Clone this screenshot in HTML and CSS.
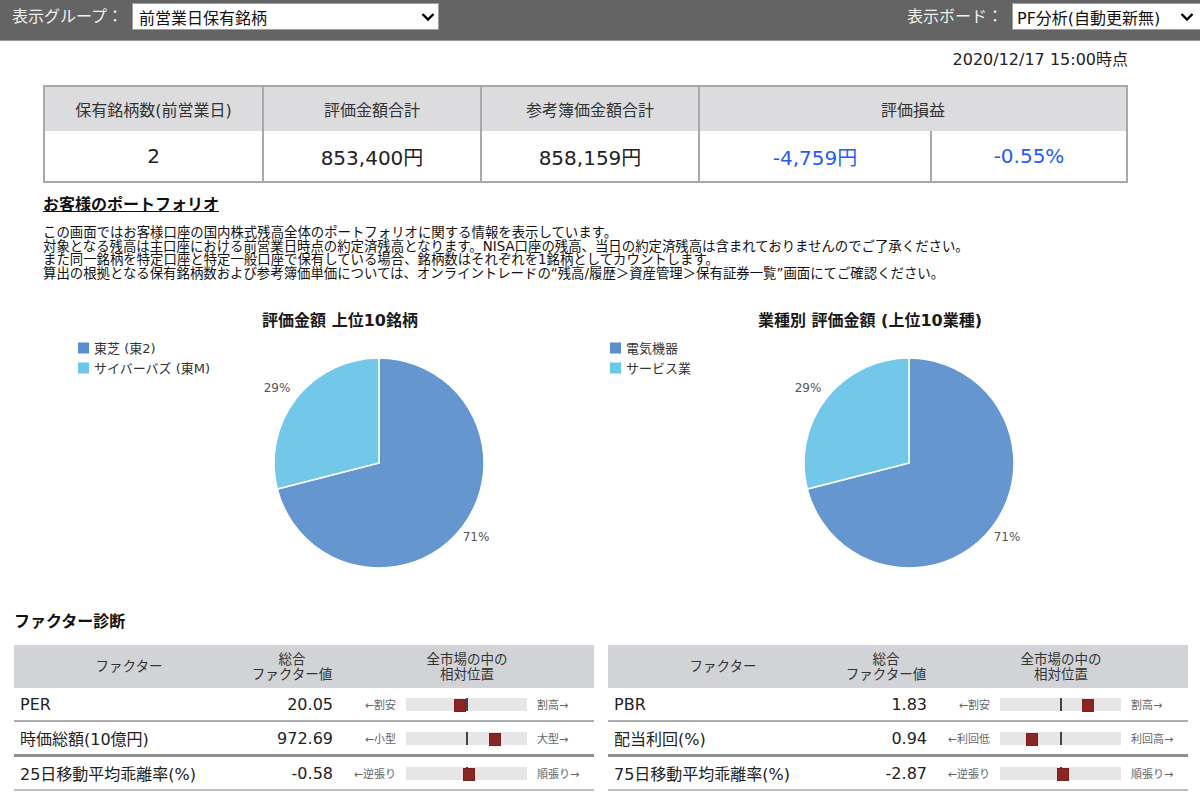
FILE: index.html
```html
<!DOCTYPE html>
<html lang="ja">

<head>
    <meta charset="UTF-8">
    <meta name="viewport" content="width=device-width, initial-scale=1.0">
    <title>PF分析</title>
    <link rel="stylesheet" href="styles.css">
</head>

<body>

    <!-- Top bar -->
    <header class="topbar">
        <div class="picker">
            <span class="picker-label">表示グループ：</span>
            <div class="select select-group">
                <span>前営業日保有銘柄</span>
                <svg class="chevron" viewBox="0 0 14 10" width="14" height="10"><polyline points="1.5,2 7,7.5 12.5,2" /></svg>
            </div>
        </div>
        <div class="picker">
            <span class="picker-label">表示ボード：</span>
            <div class="select select-board">
                <span>PF分析(自動更新無)</span>
                <svg class="chevron" viewBox="0 0 14 10" width="14" height="10"><polyline points="1.5,2 7,7.5 12.5,2" /></svg>
            </div>
        </div>
    </header>

    <main class="content">
        <p class="as-of">2020/12/17 15:00時点</p>

        <table class="summary">
            <colgroup>
                <col class="c1">
                <col class="c2">
                <col class="c3">
                <col class="c4">
                <col class="c5">
            </colgroup>
            <tr>
                <th>保有銘柄数(前営業日)</th>
                <th>評価金額合計</th>
                <th>参考簿価金額合計</th>
                <th colspan="2">評価損益</th>
            </tr>
            <tr>
                <td>2</td>
                <td>853,400円</td>
                <td>858,159円</td>
                <td class="loss">-4,759円</td>
                <td class="loss">-0.55%</td>
            </tr>
        </table>

        <h2 class="section-title">お客様のポートフォリオ</h2>
        <p class="note">
            この画面ではお客様口座の国内株式残高全体のポートフォリオに関する情報を表示しています。<br>
            対象となる残高は主口座における前営業日時点の約定済残高となります。NISA口座の残高、当日の約定済残高は含まれておりませんのでご了承ください。<br>
            また同一銘柄を特定口座と特定一般口座で保有している場合、銘柄数はそれぞれを1銘柄としてカウントします。<br>
            算出の根拠となる保有銘柄数および参考簿価単価については、オンライントレードの“残高/履歴＞資産管理＞保有証券一覧”画面にてご確認ください。
        </p>
    </main>

    <!-- Pie charts -->
    <section class="charts">
        <svg class="chart" width="530" height="280" viewBox="0 0 530 280">
            <text class="chart-title" x="280" y="26" text-anchor="middle">評価金額 上位10銘柄</text>
            <rect x="18" y="42.5" width="11" height="11" fill="#5a8ed0" />
            <text class="legend" x="34" y="52.5">東芝 (東2)</text>
            <rect x="18" y="62.5" width="11" height="11" fill="#6ac8ee" />
            <text class="legend" x="34" y="72.5">サイバーバズ (東M)</text>
            <path d="M319,163 L319,58 A105,105 0 1 1 217.3,189.1 Z" fill="#6596cf" stroke="#fff" stroke-width="1.5" />
            <path d="M319,163 L217.3,189.1 A105,105 0 0 1 319,58 Z" fill="#73c8e9" stroke="#fff" stroke-width="1.5" />
            <text class="pct" x="217" y="92" text-anchor="middle">29%</text>
            <text class="pct" x="416" y="241" text-anchor="middle">71%</text>
        </svg>
        <svg class="chart" width="530" height="280" viewBox="0 0 530 280">
            <text class="chart-title" x="280" y="26" text-anchor="middle">業種別 評価金額 (上位10業種)</text>
            <rect x="20" y="42.5" width="11" height="11" fill="#5a8ed0" />
            <text class="legend" x="36" y="52.5">電気機器</text>
            <rect x="20" y="62.5" width="11" height="11" fill="#6ac8ee" />
            <text class="legend" x="36" y="72.5">サービス業</text>
            <path d="M319,163 L319,58 A105,105 0 1 1 217.3,189.1 Z" fill="#6596cf" stroke="#fff" stroke-width="1.5" />
            <path d="M319,163 L217.3,189.1 A105,105 0 0 1 319,58 Z" fill="#73c8e9" stroke="#fff" stroke-width="1.5" />
            <text class="pct" x="218" y="92" text-anchor="middle">29%</text>
            <text class="pct" x="417" y="241" text-anchor="middle">71%</text>
        </svg>
    </section>

    <!-- Factor diagnosis -->
    <section class="factors">
        <h2 class="factor-title">ファクター診断</h2>
        <div class="factor-grid">
            <table class="factor">
                <colgroup>
                    <col class="f-name">
                    <col class="f-val">
                    <col class="f-pos">
                </colgroup>
                <thead>
                    <tr>
                        <th>ファクター</th>
                        <th>総合<br>ファクター値</th>
                        <th>全市場の中の<br>相対位置</th>
                    </tr>
                </thead>
                <tbody>
                    <tr>
                        <td class="name">PER</td>
                        <td class="val">20.05</td>
                        <td>
                            <div class="scale">
                                <span class="lo">←割安</span>
                                <div class="bar"><i class="mid"></i><i class="mark" style="left:48px"></i></div>
                                <span class="hi">割高→</span>
                            </div>
                        </td>
                    </tr>
                    <tr class="split">
                        <td class="name">時価総額(10億円)</td>
                        <td class="val">972.69</td>
                        <td>
                            <div class="scale">
                                <span class="lo">←小型</span>
                                <div class="bar"><i class="mid"></i><i class="mark" style="left:83px"></i></div>
                                <span class="hi">大型→</span>
                            </div>
                        </td>
                    </tr>
                    <tr>
                        <td class="name">25日移動平均乖離率(%)</td>
                        <td class="val">-0.58</td>
                        <td>
                            <div class="scale">
                                <span class="lo">←逆張り</span>
                                <div class="bar"><i class="mid"></i><i class="mark" style="left:57px"></i></div>
                                <span class="hi">順張り→</span>
                            </div>
                        </td>
                    </tr>
                </tbody>
            </table>

            <table class="factor">
                <colgroup>
                    <col class="f-name">
                    <col class="f-val">
                    <col class="f-pos">
                </colgroup>
                <thead>
                    <tr>
                        <th>ファクター</th>
                        <th>総合<br>ファクター値</th>
                        <th>全市場の中の<br>相対位置</th>
                    </tr>
                </thead>
                <tbody>
                    <tr>
                        <td class="name">PBR</td>
                        <td class="val">1.83</td>
                        <td>
                            <div class="scale">
                                <span class="lo">←割安</span>
                                <div class="bar"><i class="mid"></i><i class="mark" style="left:82px"></i></div>
                                <span class="hi">割高→</span>
                            </div>
                        </td>
                    </tr>
                    <tr class="split">
                        <td class="name">配当利回(%)</td>
                        <td class="val">0.94</td>
                        <td>
                            <div class="scale">
                                <span class="lo">←利回低</span>
                                <div class="bar"><i class="mid"></i><i class="mark" style="left:26px"></i></div>
                                <span class="hi">利回高→</span>
                            </div>
                        </td>
                    </tr>
                    <tr>
                        <td class="name">75日移動平均乖離率(%)</td>
                        <td class="val">-2.87</td>
                        <td>
                            <div class="scale">
                                <span class="lo">←逆張り</span>
                                <div class="bar"><i class="mid"></i><i class="mark" style="left:57px"></i></div>
                                <span class="hi">順張り→</span>
                            </div>
                        </td>
                    </tr>
                </tbody>
            </table>
        </div>
    </section>

</body>

</html>
```

FILE: styles.css
```css
/* General */
body {
    font-family: "DejaVu Sans", "Noto Sans CJK JP", sans-serif;
    margin: 0;
    padding: 0;
    background: #fff;
    color: #222;
}

/* Top bar */
.topbar {
    height: 40px;
    background-color: #646464;
    border-bottom: 1px solid #9a9a9a;
    display: flex;
    justify-content: space-between;
    align-items: flex-start;
    padding: 3px 0 0 12px;
    box-sizing: border-box;
    height: 41px;
}

.picker {
    display: flex;
    align-items: center;
}

.picker-label {
    color: #f0f0f0;
    font-size: 16px;
    line-height: 27px;
    margin-right: 9px;
}

.select {
    height: 27px;
    box-sizing: border-box;
    background: #fff;
    border: 1px solid #a0a0a0;
    display: flex;
    align-items: center;
    justify-content: space-between;
    padding: 0 3px 0 6px;
    font-size: 16px;
    color: #111;
}

.select-group {
    width: 307px;
}

.select-board {
    width: 188px;
    padding-left: 4px;
    padding-right: 6px;
    border-right: none;
}

.chevron polyline {
    fill: none;
    stroke: #000;
    stroke-width: 2.4;
}

/* Content */
.content {
    padding: 0 72px 0 43px;
}

.as-of {
    margin: 9px 0 15px;
    text-align: right;
    font-size: 16px;
    line-height: 20px;
    color: #222;
}

/* Summary table */
.summary {
    width: 1085px;
    table-layout: fixed;
    border-collapse: separate;
    border-spacing: 0;
    border: 2px solid #a9a9a9;
}

.summary .c1 { width: 217px; }
.summary .c2 { width: 218px; }
.summary .c3 { width: 218px; }
.summary .c4 { width: 232px; }
.summary .c5 { width: 196px; }

.summary th {
    height: 44px;
    padding: 0;
    background-color: #dcdcde;
    font-weight: normal;
    font-size: 16px;
    color: #333;
}

.summary td {
    height: 50px;
    padding: 0;
    text-align: center;
    font-size: 20px;
    color: #222;
}

.summary th + th,
.summary td + td {
    border-left: 2px solid #a9a9a9;
}

.summary .loss {
    color: #1e5cff;
}

/* Portfolio note */
.section-title {
    margin: 12px 0 0;
    font-size: 16px;
    line-height: 20px;
    font-weight: bold;
    text-decoration: underline;
    color: #111;
}

.note {
    margin: 11px 0 0;
    font-size: 13.4px;
    line-height: 13.5px;
    color: #111;
    white-space: nowrap;
}

/* Charts */
.charts {
    display: grid;
    grid-template-columns: 530px 530px;
    padding-left: 60px;
    margin-top: 20px;
}

.chart {
    display: block;
}

.chart-title {
    font-size: 16px;
    font-weight: bold;
    fill: #1a1a1a;
}

.legend {
    font-size: 13px;
    fill: #333;
}

.pct {
    font-size: 12px;
    fill: #555;
}

/* Factor diagnosis */
.factors {
    padding: 0 12px 0 14px;
    margin-top: 32px;
}

.factor-title {
    margin: 0 0 13px;
    font-size: 16px;
    line-height: 20px;
    font-weight: bold;
    color: #111;
}

.factor-grid {
    display: grid;
    grid-template-columns: 580px 580px;
    gap: 14px;
}

.factor {
    width: 580px;
    table-layout: fixed;
    border-collapse: separate;
    border-spacing: 0;
}

.factor .f-name { width: 230px; }
.factor .f-val { width: 96px; }
.factor .f-pos { width: 254px; }

.factor th {
    height: 43px;
    padding: 0;
    background-color: #d2d3d6;
    font-weight: normal;
    font-size: 13.5px;
    line-height: 15px;
    color: #333;
}

.factor td {
    height: 32px;
    padding: 0;
    border-bottom: 2px solid #adadad;
    font-size: 16px;
    color: #222;
}

.factor tr.split td {
    border-bottom: 3px solid #8f8f8f;
}

.factor tbody tr:last-child td {
    border-bottom: 2px solid #bdbdbd;
}

.factor .name {
    padding-left: 6px;
}

.factor .val {
    text-align: right;
    padding-right: 7px;
}

.scale {
    display: flex;
    align-items: center;
    font-size: 11px;
    color: #666;
}

.scale .lo {
    width: 56px;
    text-align: right;
    margin-right: 10px;
    white-space: nowrap;
}

.scale .hi {
    margin-left: 10px;
    white-space: nowrap;
}

.bar {
    position: relative;
    width: 121px;
    height: 13px;
    background-color: #e6e6e6;
}

.bar .mid {
    position: absolute;
    left: 60px;
    top: 0;
    width: 2px;
    height: 13px;
    background-color: #444;
}

.bar .mark {
    position: absolute;
    top: 1px;
    width: 12px;
    height: 13px;
    background-color: #8c2626;
    box-shadow: inset 0 0 0 1px #7a1e1e;
}
```
